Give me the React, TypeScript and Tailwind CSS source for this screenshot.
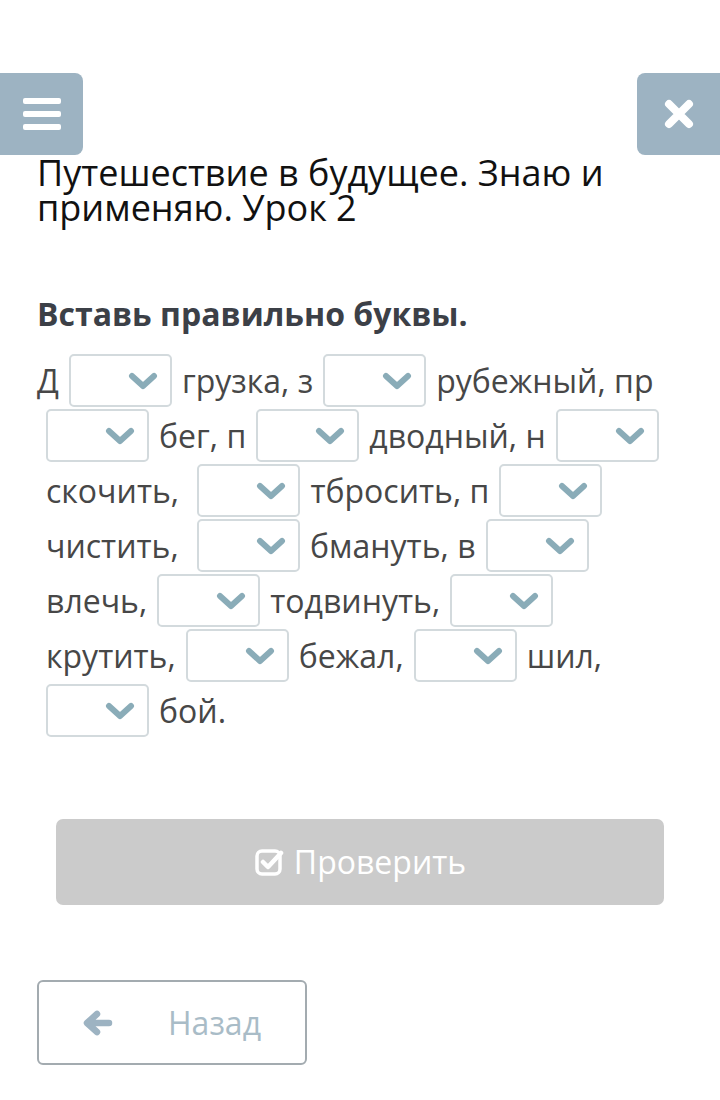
import React from "react"

const font = { fontFamily: '"Open Sans", "Noto Sans", sans-serif' }

function Chevron() {
  return (
    <svg width="30" height="20" viewBox="0 0 30 20" className="shrink-0">
      <path d="M4 5 L15 15 L26 5" fill="none" stroke="#8aacb8" strokeWidth="6" strokeLinecap="round" strokeLinejoin="round" />
    </svg>
  )
}

function Drop() {
  return (
    <span className="inline-flex h-[53px] w-[103px] shrink-0 items-center justify-end rounded-[5px] border-2 border-[#d3dadd] bg-white pr-[12px]">
      <Chevron />
    </span>
  )
}

type Part = string | 0

// two of the words carry a doubled space before the gap, as in the task text
const lines: Part[][] = [
  ["Д", 0, "грузка, з", 0, "рубежный, пр"],
  [0, "бег, п", 0, "дводный, н", 0],
  ["скочить,\u00a0", 0, "тбросить, п", 0],
  ["чистить,\u00a0", 0, "бмануть, в", 0],
  ["влечь,", 0, "тодвинуть,", 0],
  ["крутить,", 0, "бежал,", 0, "шил,"],
  [0, "бой."],
]

export default function App() {
  return (
    <div className="min-h-[1100px] w-[720px] bg-white" style={font}>
      <div className="flex justify-between pt-[73px]">
        <button className="flex h-[82px] w-[83px] flex-col items-center justify-center gap-[7px] rounded-r-[8px] bg-[#9db3c2]">
          <span className="h-[6px] w-[38px] rounded-[2px] bg-white" />
          <span className="h-[6px] w-[38px] rounded-[2px] bg-white" />
          <span className="h-[6px] w-[38px] rounded-[2px] bg-white" />
        </button>
        <button className="flex h-[82px] w-[83px] items-center justify-center rounded-l-[8px] bg-[#9db3c2]">
          <svg width="32" height="32" viewBox="0 0 32 32">
            <path d="M6 6 L26 26 M26 6 L6 26" stroke="white" strokeWidth="8" strokeLinecap="round" />
          </svg>
        </button>
      </div>

      <div className="px-[37px]">
        <h1 className="text-[36px] leading-[35px] font-normal text-[#111]">
          Путешествие в будущее. Знаю и применяю. Урок 2
        </h1>

        <h2 className="mt-[71px] text-[32px] leading-[36px] font-bold text-[#3c4047]">
          Вставь правильно буквы.
        </h2>

        <div className="mt-[22px] flex flex-col gap-[2px] text-[32px] text-[#474747]">
          {lines.map((line, i) => (
            <div key={i} className={`flex h-[53px] items-center gap-[10px] ${i === 0 ? "" : "pl-[9px]"}`}>
              {line.map((p, j) => (p === 0 ? <Drop key={j} /> : <span key={j} className="whitespace-pre leading-[40px]">{p}</span>))}
            </div>
          ))}
        </div>
      </div>

      <div className="mt-[82px] px-[56px]">
        <button className="flex h-[86px] w-full items-center justify-center gap-[10px] rounded-[7px] bg-[#cbcbcb] text-[32px] text-white">
          <svg width="30" height="30" viewBox="0 0 30 30">
            <rect x="3" y="4" width="23" height="23" rx="5" fill="none" stroke="white" strokeWidth="3.5" />
            <path d="M9 15 L14 20 L27 6" fill="none" stroke="white" strokeWidth="4.5" strokeLinecap="round" strokeLinejoin="round" />
          </svg>
          Проверить
        </button>
      </div>

      <div className="mt-[75px] px-[37px]">
        <button className="flex h-[85px] w-[270px] items-center rounded-[6px] border-2 border-[#a3abb0] bg-white pl-[44px] text-[32px] text-[#a9bcc7]">
          <svg width="30" height="26" viewBox="0 0 30 26">
            <path d="M26 13 L6 13 M14 4 L4 13 L14 22" fill="none" stroke="#9db3c2" strokeWidth="6.5" strokeLinecap="round" strokeLinejoin="round" />
          </svg>
          <span className="ml-[55px]">Назад</span>
        </button>
      </div>
    </div>
  )
}
